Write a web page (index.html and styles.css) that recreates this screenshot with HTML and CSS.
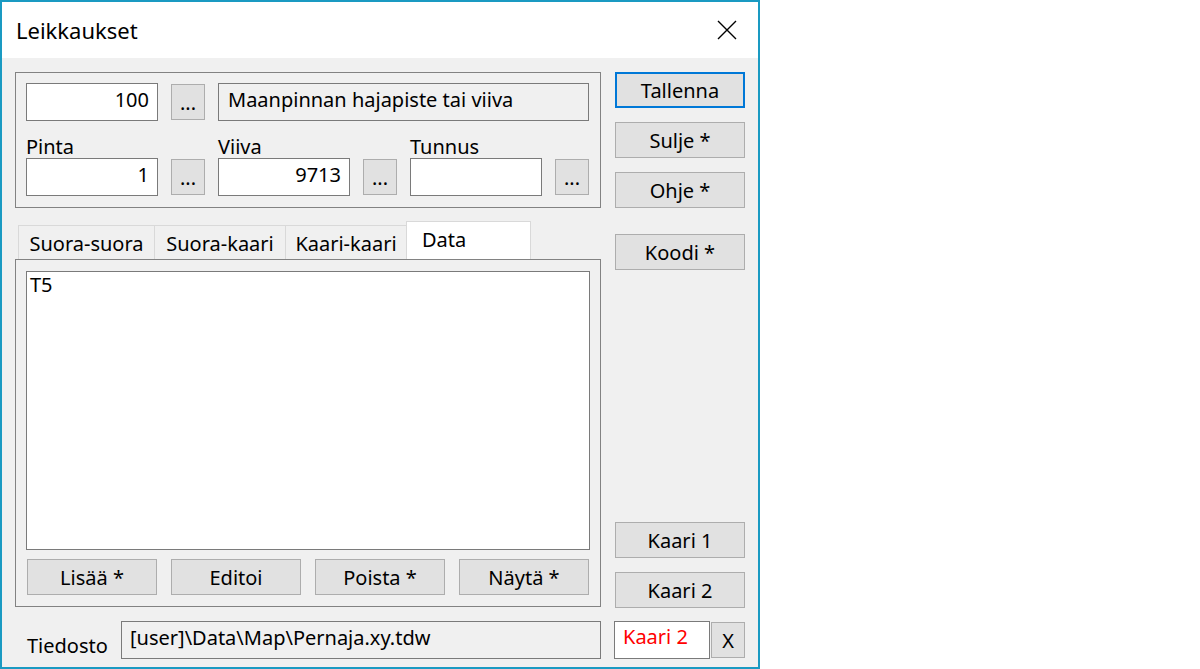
FILE: index.html
```html
<!DOCTYPE html>
<html>
<head>
<meta charset="utf-8">
<link rel="stylesheet" href="styles.css">
</head>
<body>
<div class="window">
  <div class="titlebar">
    <span class="title">Leikkaukset</span>
    <svg class="close" width="20" height="20" viewBox="0 0 20 20"><path d="M1 1 L19 19 M19 1 L1 19" stroke="#000" stroke-width="1.4" fill="none"/></svg>
  </div>
  <div class="client">
    <div class="main">
      <div class="group">
        <div class="field num">100</div>
        <div class="btn dots">...</div>
        <div class="field ro wide">Maanpinnan hajapiste tai viiva</div>
        <div class="lbl c1">Pinta</div>
        <div class="lbl c3">Viiva</div>
        <div class="lbl c5">Tunnus</div>
        <div class="field num c1">1</div>
        <div class="btn dots c2">...</div>
        <div class="field num c3">9713</div>
        <div class="btn dots c4">...</div>
        <div class="field num c5"></div>
        <div class="btn dots c6">...</div>
      </div>
      <div class="tabs">
        <div class="tab t1">Suora-suora</div>
        <div class="tab t2">Suora-kaari</div>
        <div class="tab t3">Kaari-kaari</div>
        <div class="tab active">Data</div>
      </div>
      <div class="panel">
        <div class="listbox">T5</div>
        <div class="btnrow">
          <div class="btn wbtn">Lisää *</div>
          <div class="btn wbtn">Editoi</div>
          <div class="btn wbtn">Poista *</div>
          <div class="btn wbtn">Näytä *</div>
        </div>
      </div>
    </div>
    <div class="side">
      <div class="sidegroup">
        <div class="btn wbtn default">Tallenna</div>
        <div class="btn wbtn">Sulje *</div>
        <div class="btn wbtn">Ohje *</div>
        <div class="btn wbtn koodi">Koodi *</div>
      </div>
      <div class="sidegroup">
        <div class="btn wbtn">Kaari 1</div>
        <div class="btn wbtn">Kaari 2</div>
      </div>
    </div>
    <div class="footleft">
      <span class="tlabel">Tiedosto</span>
      <div class="field path">[user]\Data\Map\Pernaja.xy.tdw</div>
    </div>
    <div class="footright">
      <div class="field redf">Kaari 2</div>
      <div class="btn xbtn">X</div>
    </div>
  </div>
</div>
</body>
</html>
```

FILE: styles.css
```css
html, body {
  margin: 0;
  padding: 0;
  background: #ffffff;
}
body {
  font-family: "Noto Sans", "Open Sans", sans-serif;
  font-size: 20px;
  color: #000;
}
.window {
  width: 760px;
  height: 669px;
  box-sizing: border-box;
  border: 2px solid #1a9ac2;
  background: #f0f0f0;
  display: flex;
  flex-direction: column;
}
.titlebar {
  height: 56px;
  background: #ffffff;
  display: flex;
  justify-content: space-between;
  align-items: flex-start;
}
.title {
  display: block;
  padding: 13px 0 0 14px;
  font-size: 22px;
  line-height: 30px;
}
.close {
  margin: 18px 21px 0 0;
  display: block;
}
.client {
  display: grid;
  grid-template-columns: 586px 130px;
  grid-template-rows: 535px 38px;
  column-gap: 14px;
  row-gap: 14px;
  padding: 14px 0 0 13px;
}
.main {
  display: flex;
  flex-direction: column;
}
.group {
  height: 136px;
  box-sizing: border-box;
  border: 1px solid #828282;
  padding: 10px 0 0 10px;
  display: grid;
  grid-template-columns: 132px 34px 132px 34px 132px 34px;
  grid-template-rows: 38px 37px 38px;
  column-gap: 13px;
}
.field {
  box-sizing: border-box;
  border: 1px solid #7a7a7a;
  background: #ffffff;
  height: 38px;
  display: flex;
  align-items: center;
  padding-bottom: 5px;
  line-height: 27px;
  white-space: nowrap;
  overflow: hidden;
}
.num {
  justify-content: flex-end;
  padding-right: 8px;
}
.ro {
  background: #f0f0f0;
  padding-left: 9px;
}
.wide {
  grid-column: 3 / 7;
}
.c1 { grid-column: 1; }
.c2 { grid-column: 2; }
.c3 { grid-column: 3; }
.c4 { grid-column: 4; }
.c5 { grid-column: 5; }
.c6 { grid-column: 6; }
.lbl {
  align-self: end;
  line-height: 22px;
  margin-bottom: 0;
  white-space: nowrap;
}
.btn {
  box-sizing: border-box;
  background: #e1e1e1;
  border: 1px solid #adadad;
  display: flex;
  align-items: center;
  justify-content: center;
  line-height: 27px;
  white-space: nowrap;
}
.dots {
  width: 34px;
  height: 36px;
  align-self: center;
}
.wbtn {
  width: 130px;
  height: 36px;
}
.default {
  border: 2px solid #0078d7;
}
.tabs {
  margin-top: 13px;
  height: 38px;
  display: flex;
  align-items: flex-end;
  padding-left: 3px;
}
.tab {
  box-sizing: border-box;
  height: 34px;
  border: 1px solid #d9d9d9;
  border-bottom: none;
  background: #f0f0f0;
  padding-top: 3px;
  line-height: 30px;
  text-align: center;
  margin-left: -1px;
  white-space: nowrap;
}
.t1 { width: 137px; margin-left: 0; }
.t2 { width: 132px; }
.t3 { width: 122px; }
.tab.active {
  width: 125px;
  height: 38px;
  background: #ffffff;
  text-align: left;
  padding-left: 15px;
}
.panel {
  height: 348px;
  box-sizing: border-box;
  border: 1px solid #828282;
  padding: 11px 0 0 10px;
}
.listbox {
  width: 564px;
  height: 279px;
  box-sizing: border-box;
  border: 1px solid #7a7a7a;
  background: #ffffff;
  padding: 0 3px;
  line-height: 26px;
}
.btnrow {
  display: flex;
  gap: 14px;
  margin-top: 9px;
  padding-left: 1px;
}
.side {
  display: flex;
  flex-direction: column;
  justify-content: space-between;
  margin-bottom: -1px;
}
.sidegroup {
  display: flex;
  flex-direction: column;
  gap: 14px;
}
.koodi {
  margin-top: 12px;
}
.footleft {
  display: flex;
  align-items: flex-start;
  padding-left: 12px;
}
.tlabel {
  width: 95px;
  padding-top: 11px;
  line-height: 27px;
  white-space: nowrap;
}
.path {
  width: 480px;
  flex: none;
  background: #f0f0f0;
  align-items: flex-start;
  padding: 2px 0 0 8px;
  line-height: 28px;
}
.footright {
  display: flex;
  align-items: flex-start;
  margin-left: -1px;
  gap: 1px;
}
.redf {
  width: 96px;
  align-items: flex-start;
  padding: 1px 0 0 8px;
  line-height: 28px;
  color: #ff0000;
}
.xbtn {
  width: 34px;
  height: 36px;
  margin-top: 1px;
}
```
